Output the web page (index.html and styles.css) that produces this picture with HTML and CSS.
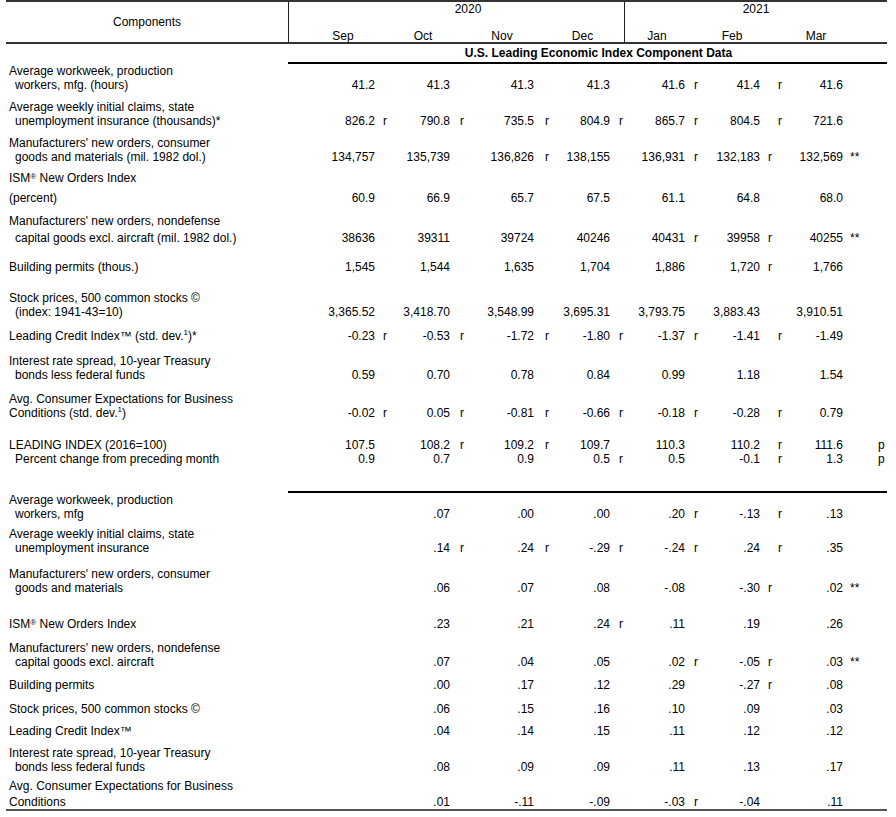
FILE: index.html
```html
<!DOCTYPE html>
<html lang="en">
<head>
<meta charset="utf-8">
<title>U.S. Leading Economic Index Component Data</title>
<link rel="stylesheet" href="styles.css">
</head>
<body>
<div class="page">
  <div class="head">
    <div class="comp">Components</div>
    <div class="yblock y2020">
      <div class="year">2020</div>
      <div class="months m2020"><span></span><span>Sep</span><span>Oct</span><span>Nov</span><span>Dec</span></div>
    </div>
    <div class="yblock y2021">
      <div class="year">2021</div>
      <div class="months m2021"><span>Jan</span><span>Feb</span><span>Mar</span><span></span></div>
    </div>
  </div>
  <div class="title">U.S. Leading Economic Index Component Data</div>

  <div class="row">
    <div class="lab"><div>Average workweek, production</div><div class="ind">workers, mfg. (hours)</div></div>
    <span class="v">41.2</span><span class="f"></span><span class="v">41.3</span><span class="f"></span><span class="v">41.3</span><span class="f"></span><span class="v">41.3</span><span class="f"></span><span class="v">41.6</span><span class="f">r</span><span class="v">41.4</span><span class="f x">r</span><span class="v">41.6</span><span class="f"></span>
  </div>
  <div class="row m8">
    <div class="lab"><div>Average weekly initial claims, state</div><div class="ind">unemployment insurance (thousands)*</div></div>
    <span class="v">826.2</span><span class="f">r</span><span class="v">790.8</span><span class="f">r</span><span class="v">735.5</span><span class="f">r</span><span class="v">804.9</span><span class="f">r</span><span class="v">865.7</span><span class="f">r</span><span class="v">804.5</span><span class="f x">r</span><span class="v">721.6</span><span class="f"></span>
  </div>
  <div class="row m8">
    <div class="lab"><div>Manufacturers' new orders, consumer</div><div class="ind">goods and materials (mil. 1982 dol.)</div></div>
    <span class="v">134,757</span><span class="f"></span><span class="v">135,739</span><span class="f"></span><span class="v">136,826</span><span class="f">r</span><span class="v">138,155</span><span class="f"></span><span class="v">136,931</span><span class="f">r</span><span class="v">132,183</span><span class="f">r</span><span class="v">132,569</span><span class="f">**</span>
  </div>
  <div class="row m7">
    <div class="lab"><div>ISM<sup class="reg">®</sup> New Orders Index</div></div>
    <span class="v"></span><span class="f"></span><span class="v"></span><span class="f"></span><span class="v"></span><span class="f"></span><span class="v"></span><span class="f"></span><span class="v"></span><span class="f"></span><span class="v"></span><span class="f"></span><span class="v"></span><span class="f"></span>
  </div>
  <div class="row m6">
    <div class="lab"><div>(percent)</div></div>
    <span class="v">60.9</span><span class="f"></span><span class="v">66.9</span><span class="f"></span><span class="v">65.7</span><span class="f"></span><span class="v">67.5</span><span class="f"></span><span class="v">61.1</span><span class="f"></span><span class="v">64.8</span><span class="f"></span><span class="v">68.0</span><span class="f"></span>
  </div>
  <div class="row m9">
    <div class="lab"><div>Manufacturers' new orders, nondefense</div><div class="ind l3">capital goods excl. aircraft (mil. 1982 dol.)</div></div>
    <span class="v">38636</span><span class="f"></span><span class="v">39311</span><span class="f"></span><span class="v">39724</span><span class="f"></span><span class="v">40246</span><span class="f"></span><span class="v">40431</span><span class="f">r</span><span class="v">39958</span><span class="f">r</span><span class="v">40255</span><span class="f">**</span>
  </div>
  <div class="row m15">
    <div class="lab"><div>Building permits (thous.)</div></div>
    <span class="v">1,545</span><span class="f"></span><span class="v">1,544</span><span class="f"></span><span class="v">1,635</span><span class="f"></span><span class="v">1,704</span><span class="f"></span><span class="v">1,886</span><span class="f"></span><span class="v">1,720</span><span class="f">r</span><span class="v">1,766</span><span class="f"></span>
  </div>
  <div class="row m17">
    <div class="lab"><div>Stock prices, 500 common stocks ©</div><div class="ind">(index: 1941-43=10)</div></div>
    <span class="v">3,365.52</span><span class="f"></span><span class="v">3,418.70</span><span class="f"></span><span class="v">3,548.99</span><span class="f"></span><span class="v">3,695.31</span><span class="f"></span><span class="v">3,793.75</span><span class="f"></span><span class="v">3,883.43</span><span class="f"></span><span class="v">3,910.51</span><span class="f"></span>
  </div>
  <div class="row m10">
    <div class="lab"><div>Leading Credit Index™ (std. dev.<sup class="sup">1</sup>)*</div></div>
    <span class="v">-0.23</span><span class="f">r</span><span class="v">-0.53</span><span class="f">r</span><span class="v">-1.72</span><span class="f">r</span><span class="v">-1.80</span><span class="f">r</span><span class="v">-1.37</span><span class="f">r</span><span class="v">-1.41</span><span class="f x">r</span><span class="v">-1.49</span><span class="f"></span>
  </div>
  <div class="row m11">
    <div class="lab"><div>Interest rate spread, 10-year Treasury</div><div class="ind">bonds less federal funds</div></div>
    <span class="v">0.59</span><span class="f"></span><span class="v">0.70</span><span class="f"></span><span class="v">0.78</span><span class="f"></span><span class="v">0.84</span><span class="f"></span><span class="v">0.99</span><span class="f"></span><span class="v">1.18</span><span class="f"></span><span class="v">1.54</span><span class="f"></span>
  </div>
  <div class="row m10">
    <div class="lab"><div>Avg. Consumer Expectations for Business</div><div>Conditions (std. dev.<sup class="sup">1</sup>)</div></div>
    <span class="v">-0.02</span><span class="f">r</span><span class="v">0.05</span><span class="f">r</span><span class="v">-0.81</span><span class="f">r</span><span class="v">-0.66</span><span class="f">r</span><span class="v">-0.18</span><span class="f">r</span><span class="v">-0.28</span><span class="f x">r</span><span class="v">0.79</span><span class="f"></span>
  </div>
  <div class="row m18">
    <div class="lab"><div>LEADING INDEX (2016=100)</div></div>
    <span class="v">107.5</span><span class="f"></span><span class="v">108.2</span><span class="f">r</span><span class="v">109.2</span><span class="f">r</span><span class="v">109.7</span><span class="f"></span><span class="v">110.3</span><span class="f"></span><span class="v">110.2</span><span class="f x">r</span><span class="v">111.6</span><span class="f p">p</span>
  </div>
  <div class="row">
    <div class="lab"><div class="ind">Percent change from preceding month</div></div>
    <span class="v">0.9</span><span class="f"></span><span class="v">0.7</span><span class="f"></span><span class="v">0.9</span><span class="f"></span><span class="v">0.5</span><span class="f">r</span><span class="v">0.5</span><span class="f"></span><span class="v">-0.1</span><span class="f x">r</span><span class="v">1.3</span><span class="f p">p</span>
  </div>

  <div class="sep"></div>

  <div class="row">
    <div class="lab"><div>Average workweek, production</div><div class="ind">workers, mfg</div></div>
    <span class="v"></span><span class="f"></span><span class="v">.07</span><span class="f"></span><span class="v">.00</span><span class="f"></span><span class="v">.00</span><span class="f"></span><span class="v">.20</span><span class="f">r</span><span class="v">-.13</span><span class="f x">r</span><span class="v">.13</span><span class="f"></span>
  </div>
  <div class="row m6">
    <div class="lab"><div>Average weekly initial claims, state</div><div class="ind">unemployment insurance</div></div>
    <span class="v"></span><span class="f"></span><span class="v">.14</span><span class="f">r</span><span class="v">.24</span><span class="f">r</span><span class="v">-.29</span><span class="f">r</span><span class="v">-.24</span><span class="f">r</span><span class="v">.24</span><span class="f x">r</span><span class="v">.35</span><span class="f"></span>
  </div>
  <div class="row m12">
    <div class="lab"><div>Manufacturers' new orders, consumer</div><div class="ind">goods and materials</div></div>
    <span class="v"></span><span class="f"></span><span class="v">.06</span><span class="f"></span><span class="v">.07</span><span class="f"></span><span class="v">.08</span><span class="f"></span><span class="v">-.08</span><span class="f"></span><span class="v">-.30</span><span class="f">r</span><span class="v">.02</span><span class="f">**</span>
  </div>
  <div class="row m22">
    <div class="lab"><div>ISM<sup class="reg">®</sup> New Orders Index</div></div>
    <span class="v"></span><span class="f"></span><span class="v">.23</span><span class="f"></span><span class="v">.21</span><span class="f"></span><span class="v">.24</span><span class="f">r</span><span class="v">.11</span><span class="f"></span><span class="v">.19</span><span class="f"></span><span class="v">.26</span><span class="f"></span>
  </div>
  <div class="row m10">
    <div class="lab"><div>Manufacturers' new orders, nondefense</div><div class="ind">capital goods excl. aircraft</div></div>
    <span class="v"></span><span class="f"></span><span class="v">.07</span><span class="f"></span><span class="v">.04</span><span class="f"></span><span class="v">.05</span><span class="f"></span><span class="v">.02</span><span class="f">r</span><span class="v">-.05</span><span class="f">r</span><span class="v">.03</span><span class="f">**</span>
  </div>
  <div class="row m9">
    <div class="lab"><div>Building permits</div></div>
    <span class="v"></span><span class="f"></span><span class="v">.00</span><span class="f"></span><span class="v">.17</span><span class="f"></span><span class="v">.12</span><span class="f"></span><span class="v">.29</span><span class="f"></span><span class="v">-.27</span><span class="f">r</span><span class="v">.08</span><span class="f"></span>
  </div>
  <div class="row m10">
    <div class="lab"><div>Stock prices, 500 common stocks ©</div></div>
    <span class="v"></span><span class="f"></span><span class="v">.06</span><span class="f"></span><span class="v">.15</span><span class="f"></span><span class="v">.16</span><span class="f"></span><span class="v">.10</span><span class="f"></span><span class="v">.09</span><span class="f"></span><span class="v">.03</span><span class="f"></span>
  </div>
  <div class="row m8">
    <div class="lab"><div>Leading Credit Index™</div></div>
    <span class="v"></span><span class="f"></span><span class="v">.04</span><span class="f"></span><span class="v">.14</span><span class="f"></span><span class="v">.15</span><span class="f"></span><span class="v">.11</span><span class="f"></span><span class="v">.12</span><span class="f"></span><span class="v">.12</span><span class="f"></span>
  </div>
  <div class="row m8">
    <div class="lab"><div>Interest rate spread, 10-year Treasury</div><div class="ind">bonds less federal funds</div></div>
    <span class="v"></span><span class="f"></span><span class="v">.08</span><span class="f"></span><span class="v">.09</span><span class="f"></span><span class="v">.09</span><span class="f"></span><span class="v">.11</span><span class="f"></span><span class="v">.13</span><span class="f"></span><span class="v">.17</span><span class="f"></span>
  </div>
  <div class="row m5">
    <div class="lab"><div>Avg. Consumer Expectations for Business</div><div class="l2">Conditions</div></div>
    <span class="v"></span><span class="f"></span><span class="v">.01</span><span class="f"></span><span class="v">-.11</span><span class="f"></span><span class="v">-.09</span><span class="f"></span><span class="v">-.03</span><span class="f">r</span><span class="v">-.04</span><span class="f"></span><span class="v">.11</span><span class="f"></span>
  </div>
  <div class="foot"></div>
</div>
</body>
</html>
```

FILE: styles.css
```css
html, body {
  margin: 0;
  padding: 0;
  background: #ffffff;
}

body {
  font-family: "Liberation Sans", Arial, sans-serif;
  font-size: 12px;
  color: #000000;
}

.page {
  margin-left: 6px;
  width: 881px;
}

/* ---------- header ---------- */
.head {
  display: grid;
  grid-template-columns: 283px 336px 262px;
  height: 44px;
  box-sizing: border-box;
  border-top: 2px solid #333333;
  border-bottom: 2px solid #333333;
  line-height: 14px;
}

.comp {
  border-right: 1px solid #222222;
  text-align: center;
  padding-top: 13px;
}

.yblock {
  display: flex;
  flex-direction: column;
}

.y2020 {
  border-right: 1px solid #222222;
}

.year {
  text-align: center;
}

.y2020 .year {
  padding-left: 23px;
}

.months {
  display: grid;
  margin-top: 13px;
  text-align: center;
}

.m2020 {
  grid-template-columns: 14px 80px 80px 78px 83px;
}

.m2021 {
  grid-template-columns: 64px 86px 82px 30px;
}

.title {
  margin-left: 282px;
  padding: 2px 0 2px 22px;
  line-height: 14px;
  font-weight: bold;
  text-align: center;
  border-bottom: 2px solid #000000;
}

/* ---------- data rows ---------- */
.row {
  display: grid;
  grid-template-columns: 294px 75px 15px 60px 24px 60px 20px 56px 15px 60px 15px 60px 24px 59px 44px;
  align-items: end;
  line-height: 14px;
  white-space: nowrap;
}

.lab {
  padding-left: 3px;
}

.ind {
  padding-left: 6px;
}

.l3 {
  padding-top: 3px;
}

.l2 {
  padding-top: 2px;
}

.v {
  text-align: right;
}

.f {
  padding-left: 8px;
}

.row .f:nth-child(5) { padding-left: 10px; }
.row .f:nth-child(7) { padding-left: 11px; }
.row .f:nth-child(9) { padding-left: 9px; }
.row .f:nth-child(11) { padding-left: 9px; }
.row .f:nth-child(13) { padding-left: 8px; }
.row .f:nth-child(15) { padding-left: 7px; }
.row .f.x { padding-left: 18px; }
.row .f.p { padding-left: 35px; }

.sup {
  font-size: 8px;
  vertical-align: 5px;
  line-height: 0;
}

.reg {
  font-size: 8px;
  vertical-align: 3px;
  line-height: 0;
}

.m5 { margin-top: 5px; }
.m6 { margin-top: 6px; }
.m7 { margin-top: 7px; }
.m8 { margin-top: 8px; }
.m9 { margin-top: 9px; }
.m10 { margin-top: 10px; }
.m11 { margin-top: 11px; }
.m12 { margin-top: 12px; }
.m15 { margin-top: 15px; }
.m17 { margin-top: 17px; }
.m18 { margin-top: 18px; }
.m22 { margin-top: 22px; }

.sep {
  margin: 25px 0 0 282px;
  border-top: 2px solid #000000;
}

.foot {
  border-top: 2px solid #555555;
}
```
